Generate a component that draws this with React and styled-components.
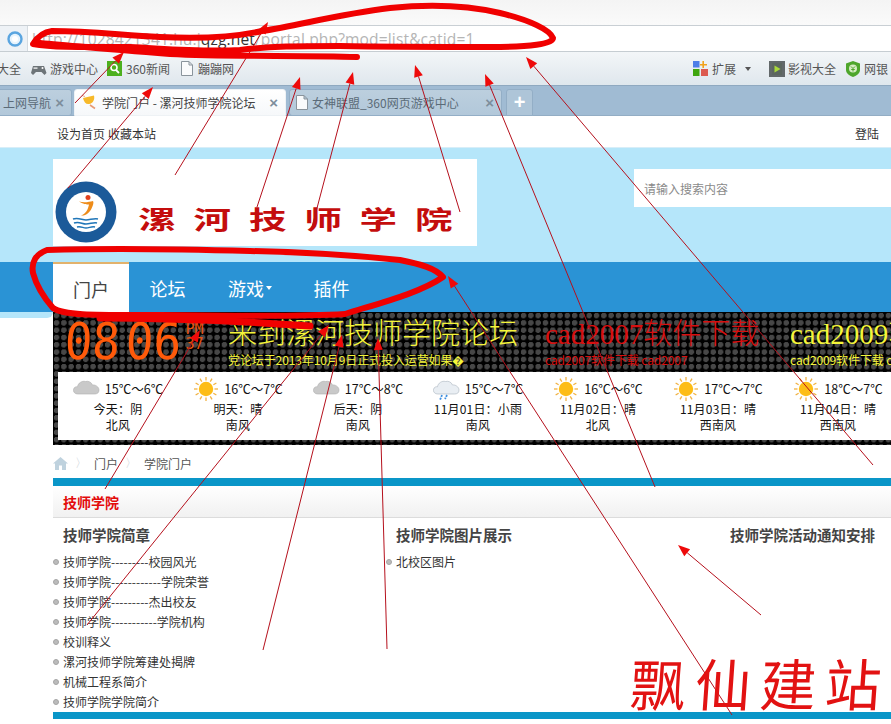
import React from 'react';
import styled, { createGlobalStyle } from 'styled-components';

const Global = createGlobalStyle`
  html, body { margin: 0; padding: 0; background: #fff; }
  body { font-family: "Noto Sans CJK SC", "Liberation Sans", sans-serif; }
`;
const Screen = styled.div`
  position: relative; width: 891px; height: 724px; overflow: hidden; background: #fff; color: #333;
`;
const TopStrip = styled.div`height: 25px; background: linear-gradient(#f4f4f4, #fafafa);`;
const AddressBar = styled.div`
  height: 25px; display: flex; border-top: 1px solid #c9cfd4; border-bottom: 1px solid #c6cdd2;
`;
const Orb = styled.div`
  width: 28px; background: #eef2f6; border-right: 1px solid #d5dbe0; display: flex; align-items: center; justify-content: center; padding-left: 2px; box-sizing: border-box;
`;
const UrlBox = styled.div`
  flex: 1; background: #fff; padding-left: 4px; font: 15.6px/26px "Open Sans", "Liberation Sans", sans-serif; color: #b5b5b5; white-space: nowrap; letter-spacing: .12px;
`;
const Host = styled.span`color: #333;`;
const Bookmarks = styled.div`
  height: 34px; box-sizing: border-box; display: flex; align-items: center; background: linear-gradient(#f3f6f8, #dfe7ed); font-size: 12px; color: #555; border-bottom: 1px solid #8fa9c0;
`;
const BookGroup = styled.div`display: flex; align-items: center; margin-left: ${p => p.$ml || 0}px;`;
const BookItem = styled.span`
  display: inline-flex; align-items: center; gap: ${p => p.$gap ?? 4}px; margin-right: ${p => p.$mr ?? 10}px; white-space: nowrap; line-height: 16px;
`;
const Caret = styled.i`
  display: inline-block; width: 0; height: 0; border: 3px solid transparent; border-top: 4px solid ${p => p.$c || '#555'}; border-bottom: 0; margin-left: ${p => p.$ml || 0}px;
`;
const TabsBar = styled.div`
  height: 30px; box-sizing: border-box; background: #a0bbd3; padding-top: 3px; display: flex; gap: 3px; border-bottom: 1px solid #93adc4; margin-bottom: 0;
`;
const Tab = styled.div`
  width: ${p => p.$w}px; margin-left: ${p => p.$ml || 0}px; flex: none; box-sizing: border-box; height: 27px; border-radius: 3px 3px ${p => p.$active ? '0 0' : '3px 3px'};
  background: ${p => p.$active ? 'linear-gradient(#fff,#f6f8fa)' : 'linear-gradient(#bccfde,#b2c8da)'};
  border: 1px solid ${p => p.$active ? '#eef2f5' : '#93aec6'}; display: flex; align-items: center; padding: 0 7px 0 ${p => p.$pl ?? 6}px; font-size: 12px; color: ${p => p.$active ? '#444' : '#5b6b78'}; white-space: nowrap; overflow: hidden;
`;
const TabTitle = styled.span`flex: 1; overflow: hidden; margin-left: 4px;`;
const TabX = styled.span`font: bold 15px/1 "Liberation Sans", sans-serif; color: #7d8e9c; margin-left: 4px;`;
const NewTab = styled.div`
  width: 27px; height: 27px; box-sizing: border-box; margin-left: 1px; border: 1px solid #93aec6; border-radius: 3px 3px 0 0; background: #aec5d8; color: #fff; font: bold 20px/24px "Liberation Sans", sans-serif; text-align: center;
`;
const UserBar = styled.div`
  height: 32px; background: #fff; display: flex; justify-content: space-between; align-items: center; padding: 3px 12px 0 57px; box-sizing: border-box; font-size: 12px; color: #333; border-bottom: 1px solid #d8eef8;
`;
const UserLinks = styled.div`display: flex; gap: 3px;`;
const Banner = styled.div`
  height: 114px; box-sizing: border-box; background: #b5e6fa; padding: 11px 0 0 53px; display: flex; align-items: flex-start;
`;
const LogoBox = styled.div`
  width: 424px; height: 87px; background: #fff; flex: none; display: flex; align-items: flex-end; padding: 0 0 3px 2px; box-sizing: border-box;
`;
const LogoName = styled.span`
  font: 700 25px/38px "Noto Sans CJK SC", sans-serif; color: #c40d0d; letter-spacing: 12px; word-spacing: -18px; white-space: nowrap; display: inline-block; transform: scaleX(1.5); transform-origin: left center; margin: 0 0 6px 21px;
`;
const Search = styled.div`
  width: 257px; height: 38px; background: #fff; margin: 10px 0 0 157px; flex: none; padding-left: 10px; box-sizing: border-box; font-size: 12px; line-height: 40px; color: #8a8a8a;
`;
const Nav = styled.nav`
  height: 50px; background: #2a93d5; padding-left: 53px; display: flex; font-size: 18px; color: #fff;
`;
const NavItem = styled.a`
  display: flex; align-items: center; justify-content: center; box-sizing: border-box; width: ${p => p.$w}px; padding-top: 2px;
  ${p => p.$active ? 'background:#fff;color:#444;border-top:2px solid #e2b26c;' : ''}
`;
const Stage = styled.section`
  position: relative; margin-left: 53px; width: 860px; height: 133px; box-sizing: border-box; padding: 0 0 5px 5px;
  background-color: #000; background-image: radial-gradient(circle at 3.5px 3.5px, #474747 2.6px, transparent 3px); background-size: 7.3px 7.3px;
  &::before { content: ""; position: absolute; left: -53px; top: 0; width: 53px; height: 6px; background: #b5e6fa; border-radius: 0 0 30px 0; }
`;
const Ticker = styled.div`height: 60px; position: relative; display: flex; margin-left: 8px; white-space: nowrap;`;
const Clock = styled.div`
  width: 162px; flex: none; display: flex; color: #ff5a0a; font-family: "DejaVu Sans Mono", monospace; padding-top: 3px;
`;
const ClockDigits = styled.span`
  font-size: 46px; line-height: 48px; letter-spacing: 0; transform: scaleY(1.1) skewX(-3deg); transform-origin: top left; word-spacing: -22px;
`;
const ClockSide = styled.span`
  font-size: 15px; line-height: 15px; margin: 7px 0 0 3px; display: flex; flex-direction: column; color: #e8520c;
`;
const Message = styled.div`
  width: ${p => p.$w}px; flex: none; color: ${p => p.$c}; overflow: visible;
`;
const MessageTitle = styled.div`
  font: 29px/40px "Liberation Serif", "Noto Sans CJK SC", serif; margin-top: 2px; font-weight: 300;
`;
const MessageSub = styled.div`font-size: 12px; line-height: 14px; margin-top: -1px; letter-spacing: -.1px;`;
const Weather = styled.div`
  height: 68px; background: #fff; display: flex; color: #111; font-size: 12px;
`;
const Day = styled.div`
  width: 120px; flex: none; display: flex; flex-direction: column; align-items: center; padding-top: 5px; box-sizing: border-box; line-height: 16px; white-space: nowrap;
`;
const DayTemp = styled.div`
  display: flex; align-items: center; gap: 5px; height: 24px; font-size: 12.5px;
`;
const DayLine = styled.div`height: 16px; letter-spacing: .2px;`;
const Crumbs = styled.div`
  height: 33px; box-sizing: border-box; padding: 3px 0 0 53px; display: flex; align-items: center; gap: 7px; font-size: 12px; color: #555;
`;
const Sep = styled.span`color: #c6ced4; font: 12px "Liberation Sans", sans-serif;`;
const Block = styled.section`margin-left: 53px; width: 880px; border-top: 8px solid #0a96c8; border-bottom: 7px solid #0a96c8; height: 241px; box-sizing: border-box;`;
const BlockHead = styled.h1`
  margin: 0; height: 32px; box-sizing: border-box; padding-left: 10px; background: linear-gradient(#fff, #f1f1f1); border-bottom: 1px solid #dcdcdc; font-size: 14px; line-height: 32px; font-weight: 700; color: #e30b0b;
`;
const Cols = styled.div`display: grid; grid-template-columns: 333px 334px 213px;`;
const Col = styled.div`padding-left: 10px; min-width: 0;`;
const ColTitle = styled.h2`
  margin: 0; font-size: 14.5px; line-height: 34px; height: 34px; color: #444; font-weight: 700; white-space: nowrap;
`;
const Links = styled.ul`margin: 0 0 0 -10px; padding: 0; list-style: none; `;
const LinkRow = styled.li`
  height: 20px; line-height: 20px; font-size: 12px; color: #333; padding-left: 10px; position: relative; white-space: nowrap; letter-spacing: 0;
  &::before { content: ""; position: absolute; left: 0; top: 7px; width: 4px; height: 4px; border-radius: 50%; background: #bbb; border: 1px solid #a5a5a5; }
`;
const Signature = styled.div`
  position: absolute; left: 630px; top: 655px; font: 56px/64px "Liberation Serif", "Noto Sans CJK SC", serif; color: #e21212; letter-spacing: 9px; white-space: nowrap; transform: skewX(-4deg); z-index: 3;
`;
const Ink = styled.svg`position: absolute; inset: 0; width: 891px; height: 724px; pointer-events: none; z-index: 2;`;

function Arrow({ from, to }) {
  const [x1, y1] = from, [x2, y2] = to;
  const a = Math.atan2(y2 - y1, x2 - x1), L = 12, W = 4.5;
  const bx = x2 - L * Math.cos(a), by = y2 - L * Math.sin(a);
  const px = -Math.sin(a) * W, py = Math.cos(a) * W;
  return (
    <g>
      <line x1={x1} y1={y1} x2={bx} y2={by} stroke="#b5101c" strokeWidth="1" />
      <polygon points={`${x2},${y2} ${bx + px},${by + py} ${bx - px},${by - py}`} fill="#ee0a0a" />
    </g>
  );
}
const arrows = [
  [[75, 103], [124, 52]], [[68, 188], [153, 87]], [[175, 175], [268, 22]], [[257, 207], [300, 77]],
  [[312, 227], [353, 72]], [[460, 212], [415, 65]], [[655, 487], [485, 74]], [[873, 465], [526, 57]],
  [[732, 715], [448, 276]], [[761, 615], [678, 545]], [[105, 489], [200, 330]], [[87, 625], [329, 325]],
  [[263, 650], [342, 335]], [[387, 649], [378, 338]],
];

const Globe = () => (
  <svg width="16" height="16" viewBox="0 0 16 16"><circle cx="8" cy="8" r="6.5" fill="#e8f4fd" stroke="#5aa5e0" strokeWidth="2.4" /><circle cx="8" cy="8" r="3" fill="#fff" /></svg>
);
const Pad = () => (
  <svg width="17" height="14" viewBox="0 0 17 14"><path d="M3 4h11l2.5 7-2 2-3-3H6l-3 3-2-2z" fill="#6d7478" /><circle cx="12.5" cy="6" r="1" fill="#fff" /><rect x="3.5" y="5.5" width="4" height="1.2" fill="#fff" /></svg>
);
const Find = () => (
  <svg width="15" height="15" viewBox="0 0 15 15"><rect width="15" height="15" fill="#4db01e" /><circle cx="7" cy="6.5" r="3" fill="none" stroke="#fff" strokeWidth="1.6" /><path d="M9 9l3 3" stroke="#fff" strokeWidth="1.8" /></svg>
);
const Page = ({ c = '#8a949c' }) => (
  <svg width="12" height="15" viewBox="0 0 12 15"><path d="M.5.5h7.5l3.5 3.5v10.5H.5zM8 .5V4h3.5" fill="#fafbfc" stroke={c} /></svg>
);
const Squares = () => (
  <svg width="15" height="15" viewBox="0 0 15 15"><rect width="6.5" height="6.5" fill="#4d7fe8" /><path d="M11 0v3h3v1.6h-3V7H9.400V4.600H7V3h2.400V0z" fill="#f2a21a" /><rect y="8" width="6.5" height="7" fill="#3fa60f" /><rect x="8" y="8" width="7" height="7" fill="#dc5a50" /></svg>
);
const Film = () => (
  <svg width="16" height="16" viewBox="0 0 16 16"><rect width="16" height="16" fill="#62686a" /><rect x="3" y="2" width="10" height="12" fill="#5c6660" /><path d="M5.500 4.500l6 3.500-6 3.500z" fill="#a9d83a" /></svg>
);
const Shield = () => (
  <svg width="14" height="16" viewBox="0 0 14 16"><path d="M7 0l7 2.500V9c0 3.500-4 6-7 7-3-1-7-3.500-7-7V2.500z" fill="#4ea62c" /><circle cx="7" cy="7.500" r="4" fill="#d7ecc4" /><path d="M5 5.500l2 2 2-2M7 7.500v3M5.200 8.500h3.600" stroke="#4ea62c" fill="none" /></svg>
);
const Bell = () => (
  <svg width="17" height="16" viewBox="0 0 17 16"><path d="M2 3l11-2.500c1 4-1 8-5 8.500-3 .5-5-2-6-6z" fill="#f7b92a" /><path d="M9 10l5 3.500" stroke="#e89a72" strokeWidth="1.600" /><path d="M1 .5l3 1" stroke="#ea8" /></svg>
);
const Home = () => (
  <svg width="15" height="13" viewBox="0 0 15 13"><path d="M7.500 0L15 6.500h-2V13H9V8.500H6V13H2V6.500H0z" fill="#bfd2de" /></svg>
);
const Crest = () => (
  <svg width="62" height="62" viewBox="0 0 62 62">
    <circle cx="31" cy="31" r="30.500" fill="#1b5a99" />
    <circle cx="31" cy="31" r="20" fill="#fff" />
    <path d="M38 20c-4 1-9 2-14 .5 5 3 8 3 10 3-1 5-3 9-8 11 5 .5 9-3 11-8 1-2 2-5 1-6.500z" fill="#ee8c1a" />
    <circle cx="33" cy="16.500" r="2.500" fill="#e0401e" />
    <path d="M18 38c5-2 9 1 13 1s8-2 12-1M19 42c5-2 8 1 12 1s8-2 11-1M22 46c4-1 6 1 9 1s6-2 9-1" stroke="#2076b8" strokeWidth="1.500" fill="none" />
  </svg>
);
const Cloud = ({ rain }) => (
  <svg width="27" height="24" viewBox="0 0 27 24">
    <path d="M5 17c-3 0-5-2-4.500-4.500C1 10 3 9.500 4.500 9.800 5 6 9 3.500 12.500 4.500c2.500-.8 6 .5 7 3.500 3-.5 6.500 2 6.500 5s-2 4-4.500 4z" fill={rain ? '#e9eef3' : '#c9c9c9'} stroke={rain ? '#a9b4bd' : '#b0b0b0'} strokeWidth=".6" />
    {rain && <path d="M9 18l-2 5M14 18l-2 4" stroke="#3f8fe0" strokeWidth="1.800" strokeDasharray="2 1" />}
  </svg>
);
const Sun = () => (
  <svg width="26" height="26" viewBox="0 0 26 26">
    <g stroke="#f1b243" strokeWidth="1.300">
      {[0, 30, 60, 90, 120, 150, 180, 210, 240, 270, 300, 330].map(a => <line key={a} x1="13" y1="1" x2="13" y2="4.500" transform={`rotate(${a} 13 13)`} />)}
    </g>
    <circle cx="13" cy="13" r="7.200" fill="#fdbd16" />
  </svg>
);

const days = [
  ['c', '15℃～6℃', '今天：阴', '北风'], ['s', '16℃～7℃', '明天：晴', '南风'], ['c', '17℃～8℃', '后天：阴', '南风'],
  ['r', '15℃～7℃', '11月01日：小雨', '南风'], ['s', '16℃～6℃', '11月02日：晴', '北风'],
  ['s', '17℃～7℃', '11月03日：晴', '西南风'], ['s', '18℃～7℃', '11月04日：晴', '西南风'],
];
const links = ['技师学院---------校园风光', '技师学院------------学院荣誉', '技师学院---------杰出校友', '技师学院-----------学院机构', '校训释义', '漯河技师学院筹建处揭牌', '机械工程系简介', '技师学院学院简介'];

export default function App() {
  return (
    <Screen>
      <Global />
      <TopStrip />
      <AddressBar>
        <Orb><Globe /></Orb>
        <UrlBox>http://1028421341.hu.j<Host>qzg.net</Host>/portal.php?mod=list&amp;catid=1</UrlBox>
      </AddressBar>
      <Bookmarks>
        <BookGroup $ml={-3}>
          <BookItem $mr={9}>大全</BookItem>
          <BookItem $gap={3} $mr={9}><Pad />游戏中心</BookItem>
          <BookItem $mr={11}><Find />360新闻</BookItem>
          <BookItem $gap={5}><Page />蹦蹦网</BookItem>
        </BookGroup>
        <BookGroup $ml={449}>
          <BookItem $mr={18}><Squares />扩展<Caret $ml={5} /></BookItem>
          <BookItem $gap={3} $mr={10}><Film />影视大全</BookItem>
          <BookItem $mr={0}><Shield />网银<Caret $ml={7} /></BookItem>
        </BookGroup>
      </Bookmarks>
      <TabsBar>
        <Tab $w={82} $ml={-10} $pl={8}><TabTitle>上网导航</TabTitle><TabX>×</TabX></Tab>
        <Tab $w={212} $active $ml={-1}><Bell /><TabTitle>学院门户 - 漯河技师学院论坛</TabTitle><TabX>×</TabX></Tab>
        <Tab $w={213}><Page /><TabTitle>女神联盟_360网页游戏中心</TabTitle><TabX>×</TabX></Tab>
        <NewTab>+</NewTab>
      </TabsBar>
      <UserBar>
        <UserLinks><span>设为首页</span><span>收藏本站</span></UserLinks>
        <span>登陆</span>
      </UserBar>
      <Banner>
        <LogoBox><Crest /><LogoName>漯河技师 学院</LogoName></LogoBox>
        <Search>请输入搜索内容</Search>
      </Banner>
      <Nav>
        <NavItem $w={76} $active>门户</NavItem>
        <NavItem $w={77}>论坛</NavItem>
        <NavItem $w={88}>游戏<Caret $c="#fff" $ml={2} /></NavItem>
        <NavItem $w={75}>插件</NavItem>
      </Nav>
      <Stage>
        <Ticker>
          <Clock>
            <ClockDigits>08 06</ClockDigits>
            <ClockSide><span>PM</span><span>37</span></ClockSide>
          </Clock>
          <Message $w={317} $c="#f5f53a">
            <MessageTitle>来到漯河技师学院论坛</MessageTitle>
            <MessageSub>党论坛于2013年10月9日正式投入运营如果�</MessageSub>
          </Message>
          <Message $w={245} $c="#d80f0f">
            <MessageTitle>cad2007软件下载</MessageTitle>
            <MessageSub>cad2007软件下载 cad2007</MessageSub>
          </Message>
          <Message $w={200} $c="#f5f53a">
            <MessageTitle>cad2009软件下载</MessageTitle>
            <MessageSub>cad2009软件下载 cad2009</MessageSub>
          </Message>
        </Ticker>
        <Weather>
          {days.map(d => (
            <Day key={d[2]}>
              <DayTemp>{d[0] === 's' ? <Sun /> : <Cloud rain={d[0] === 'r'} />}{d[1]}</DayTemp>
              <DayLine>{d[2]}</DayLine>
              <DayLine>{d[3]}</DayLine>
            </Day>
          ))}
        </Weather>
      </Stage>
      <Crumbs><Home /><Sep>〉</Sep><span>门户</span><Sep>〉</Sep><span>学院门户</span></Crumbs>
      <Block>
        <BlockHead>技师学院</BlockHead>
        <Cols>
          <Col>
            <ColTitle>技师学院简章</ColTitle>
            <Links>{links.map(l => <LinkRow key={l}>{l}</LinkRow>)}</Links>
          </Col>
          <Col>
            <ColTitle>技师学院图片展示</ColTitle>
            <Links><LinkRow>北校区图片</LinkRow></Links>
          </Col>
          <Col><ColTitle>技师学院活动通知安排</ColTitle></Col>
        </Cols>
      </Block>
      <Ink viewBox="0 0 891 724">
        {arrows.map((a, i) => <Arrow key={i} from={a[0]} to={a[1]} />)}
        <g fill="none" stroke="#f00000" strokeLinecap="round" strokeLinejoin="round">
          <path d="M33 44C38 36 44 32 52 31C90 31 120 35 160 37C200 39 235 37 262 31C300 25 340 14 390 8C430 4 470 6 500 13C530 20 550 30 553 38C553 44 530 47 490 47C440 47 390 47 340 46C300 46 270 46 240 50C200 52 170 49 130 47C90 47 55 48 33 44Z" strokeWidth="6" />
          <path d="M40 43C70 46 120 50 170 54C230 57 300 55 357 57" strokeWidth="6" />
          <path d="M47 250C36 254 31 262 33 273C37 288 46 300 53 308C64 316 100 315 160 315C230 316 300 317 345 314C380 303 420 293 443 277C435 268 420 264 400 260C340 254 300 252 250 251C180 249 110 248 47 250Z" strokeWidth="6" />
          <path d="M100 318C170 318 240 321 310 326" strokeWidth="7" />
        </g>
      </Ink>
      <Signature>飘仙建站</Signature>
    </Screen>
  );
}
